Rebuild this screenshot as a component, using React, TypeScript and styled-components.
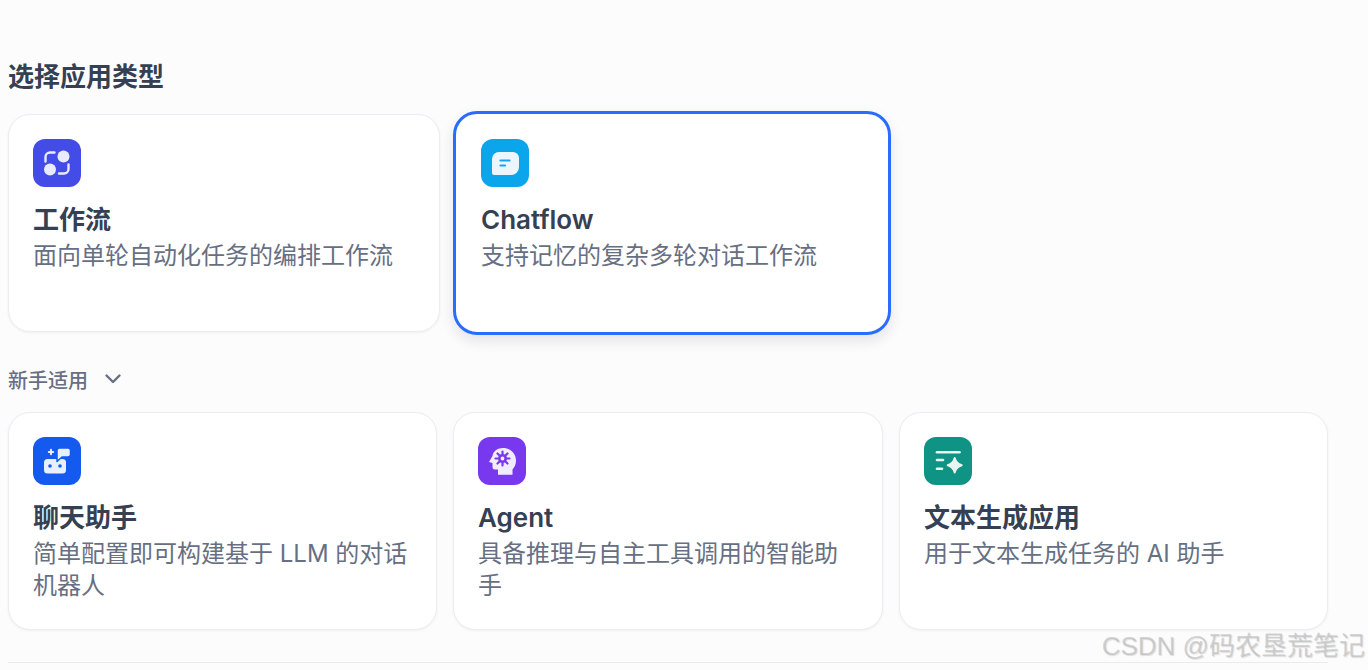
import React from 'react';
import styled, { createGlobalStyle } from 'styled-components';

const GlobalStyle = createGlobalStyle`
  html, body {
    margin: 0;
    padding: 0;
    background: #fcfcfd;
    overflow: hidden;
  }
  body {
    font-family: Inter, 'Noto Sans CJK SC', sans-serif;
  }
`;

const Page = styled.main`
  position: relative;
  box-sizing: border-box;
  width: 1368px;
  height: 670px;
  padding: 60px 0 0 8px;
`;

const Heading = styled.h2`
  margin: 0 0 31px;
  font-size: 26px;
  line-height: 34px;
  height: 20px;
  font-weight: 600;
  color: #354052;
`;

const Row = styled.div<{ $gap: number }>`
  display: flex;
  align-items: center;
  gap: ${(p) => p.$gap}px;
`;

const Card = styled.section<{ $width: number; $selected?: boolean }>`
  box-sizing: border-box;
  width: ${(p) => p.$width}px;
  height: ${(p) => (p.$selected ? 224 : 218)}px;
  padding: ${(p) => (p.$selected ? '25px' : '24px')};
  background: #fff;
  border-radius: ${(p) => (p.$selected ? 24 : 22)}px;
  border: ${(p) => (p.$selected ? '3px solid #296dff' : '1px solid #ebedf3')};
  box-shadow: ${(p) =>
    p.$selected ? '0 6px 14px rgba(16, 24, 40, 0.1)' : '0 1px 3px rgba(16, 24, 40, 0.05)'};
`;

const IconTile = styled.div<{ $bg: string }>`
  display: flex;
  align-items: center;
  justify-content: center;
  width: 48px;
  height: 48px;
  border-radius: 12px;
  background: ${(p) => p.$bg};
`;

const CardTitle = styled.h3`
  margin: 16px 0 0;
  font-size: 26px;
  line-height: 34px;
  font-weight: 600;
  color: #354052;
`;

const CardDesc = styled.p`
  margin: 3px 0 0;
  font-size: 24px;
  line-height: 32px;
  font-weight: 400;
  color: #676f83;
`;

const Toggle = styled.div`
  display: flex;
  align-items: center;
  gap: 15px;
  height: 26px;
  margin: 31px 0 20px;
  font-size: 20px;
  font-weight: 500;
  color: #676f83;
`;

const Divider = styled.hr`
  width: 1320px;
  margin: 32px 0 0;
  border: 0;
  border-top: 1px solid #e9ebf0;
`;

const Watermark = styled.span`
  position: absolute;
  right: 3px;
  bottom: 9px;
  font-family: 'Liberation Sans', 'Noto Sans CJK SC', sans-serif;
  font-size: 26px;
  line-height: 30px;
  color: rgba(180, 180, 180, 0.55);
  text-shadow: 1px 1px 1px rgba(150, 150, 150, 0.3);
`;

const Glyph: React.FC<{ children: React.ReactNode }> = ({ children }) => (
  <svg width="48" height="48" viewBox="0 0 48 48" fill="none">
    {children}
  </svg>
);

const WorkflowIcon = () => (
  <Glyph>
    <circle cx="30.5" cy="17.500" r="6" fill="#e9ebfd" />
    <circle cx="17" cy="30.500" r="6" fill="#e9ebfd" />
    <path d="M12.500 22.500v-4.500a4.500 4.500 0 0 1 4.500-4.500H21.500" stroke="#e9ebfd" strokeWidth="2.400" strokeLinecap="round" />
    <path d="M35.500 25.500v4.500a4.500 4.500 0 0 1-4.500 4.500H26" stroke="#e9ebfd" strokeWidth="2.400" strokeLinecap="round" />
  </Glyph>
);

const ChatflowIcon = () => (
  <Glyph>
    <path
      d="M18 13h14a6 6 0 0 1 6 6v9a8 8 0 0 1-8 8H13a2 2 0 0 1-2-2V20a7 7 0 0 1 7-7Z"
      fill="#edf6fe"
    />
    <path d="M19.500 21.500h9" stroke="#1ba4ee" strokeWidth="2.200" strokeLinecap="round" />
    <path d="M19.500 26.500h4.500" stroke="#1ba4ee" strokeWidth="2.200" strokeLinecap="round" />
  </Glyph>
);

const AssistantIcon = () => (
  <Glyph>
    <rect x="11" y="22" width="22" height="14.500" rx="3.500" fill="#e8efff" />
    <path
      d="M26.500 11h8.500a2.500 2.500 0 0 1 2.500 2.500v4a2.500 2.500 0 0 1-2.500 2.500h-6l-5 4.500V13.500a2.500 2.500 0 0 1 2.500-2.500Z"
      fill="#e8efff"
      stroke="#155aef"
      strokeWidth="1.500"
      strokeLinejoin="round"
    />
    <circle cx="17" cy="29" r="1.800" fill="#155aef" />
    <circle cx="27" cy="29" r="1.800" fill="#155aef" />
    <path d="M18 12.800v4.400M15.800 15h4.400" stroke="#e8efff" strokeWidth="2" strokeLinecap="round" />
  </Glyph>
);

const AgentIcon = () => (
  <Glyph>
    <path
      d="M25 11c7.500 0 13 5.500 13 12.500 0 4-1.600 7-3.500 9v5.200H20v-5.200h-3a2.500 2.500 0 0 1-2.500-2.500v-4l-3.500-1 3.500-6C15 14.500 19.500 11 25 11Z"
      fill="#f1ebfe"
    />
    <path
      d="M24.500 14.500v3M24.500 25.500v3M17.500 21.500h3M28.500 21.500h3M19.500 16.500l2 2M27.500 24.500l2 2M19.500 26.500l2-2M27.500 18.500l2-2"
      stroke="#7839ee"
      strokeWidth="2.200"
      strokeLinecap="round"
    />
    <circle cx="24.500" cy="21.500" r="3.200" stroke="#7839ee" strokeWidth="2.600" fill="#f1ebfe" />
  </Glyph>
);

const TextGenIcon = () => (
  <Glyph>
    <g stroke="#e8f5f2" strokeWidth="2.600" strokeLinecap="round">
      <path d="M13 15.300h22.500" />
      <path d="M13 23h6" />
      <path d="M13 31.700h5" />
    </g>
    <path
      d="M30.700 21c.9 4 2.800 6 7 7.300-4.200 1.300-6.100 3.300-7 7.300-.9-4-2.800-6-7-7.300 4.200-1.300 6.100-3.300 7-7.300Z"
      fill="#e8f5f2"
      stroke="#e8f5f2"
      strokeWidth="2"
      strokeLinejoin="round"
    />
  </Glyph>
);

const Chevron = () => (
  <svg width="20" height="20" viewBox="0 0 20 20" fill="none">
    <path d="M3.500 6.500 10 13l6.500-6.500" stroke="#676f83" strokeWidth="2.400" strokeLinecap="round" strokeLinejoin="round" />
  </svg>
);

interface AppType {
  title: string;
  desc: string;
  color: string;
  width: number;
  icon: React.ReactNode;
  selected?: boolean;
}

const primaryTypes: AppType[] = [
  { title: '工作流', desc: '面向单轮自动化任务的编排工作流', color: '#444ce7', width: 432, icon: <WorkflowIcon /> },
  { title: 'Chatflow', desc: '支持记忆的复杂多轮对话工作流', color: '#0ba5ec', width: 438, icon: <ChatflowIcon />, selected: true },
];

const beginnerTypes: AppType[] = [
  { title: '聊天助手', desc: '简单配置即可构建基于 LLM 的对话机器人', color: '#155aef', width: 429, icon: <AssistantIcon /> },
  { title: 'Agent', desc: '具备推理与自主工具调用的智能助手', color: '#7839ee', width: 430, icon: <AgentIcon /> },
  { title: '文本生成应用', desc: '用于文本生成任务的 AI 助手', color: '#0e9384', width: 429, icon: <TextGenIcon /> },
];

const TypeCard: React.FC<{ item: AppType }> = ({ item }) => (
  <Card $width={item.width} $selected={item.selected}>
    <IconTile $bg={item.color}>{item.icon}</IconTile>
    <CardTitle>{item.title}</CardTitle>
    <CardDesc>{item.desc}</CardDesc>
  </Card>
);

const App: React.FC = () => {
  return (
    <Page>
      <GlobalStyle />
      <Heading>选择应用类型</Heading>
      <Row $gap={13}>
        {primaryTypes.map((t) => (
          <TypeCard key={t.title} item={t} />
        ))}
      </Row>
      <Toggle>
        新手适用
        <Chevron />
      </Toggle>
      <Row $gap={16}>
        {beginnerTypes.map((t) => (
          <TypeCard key={t.title} item={t} />
        ))}
      </Row>
      <Divider />
      <Watermark>CSDN @码农垦荒笔记</Watermark>
    </Page>
  );
};

export default App;
